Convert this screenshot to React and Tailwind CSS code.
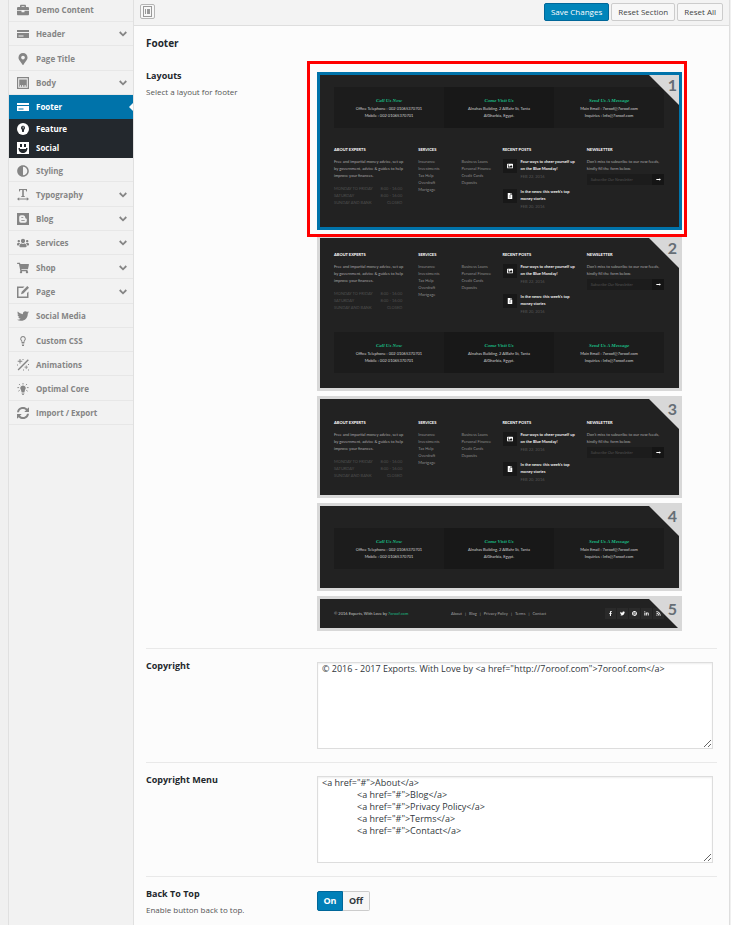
import React from "react";
import {
  FaAdjust,
  FaBriefcase,
  FaFacebookF,
  FaFileAlt,
  FaLinkedinIn,
  FaImage,
  FaLongArrowAltRight,
  FaMapMarkerAlt,
  FaPinterest,
  FaRss,
  FaShoppingCart,
  FaTwitter,
  FaUsers,
} from "react-icons/fa";

function Glyph({ children }) {
  return (
    <svg viewBox="0 0 12 12" className="h-3 w-3" fill="currentColor" aria-hidden="true">
      {children}
    </svg>
  );
}

const CardIcon = () => (
  <Glyph>
    <path fillRule="evenodd" d="M0 2h12v2H0zM0 5h12v5H0zM1.500 7.500h5v1h-5z" />
  </Glyph>
);
const BodyIcon = () => (
  <Glyph>
    <path fillRule="evenodd" d="M0 0h12v12H0zM1.200 1.200v9.600h9.600V1.200z" />
    <path d="M2.200 2.500h7.600V8H2.200zM2.200 8h1v1.800h-1zM4 8h1v1.800H4zM5.800 8h1v1.800h-1zM7.400 8h1v1.800h-1zM9 8h.8v1.800H9z" />
  </Glyph>
);
const FeatureIcon = () => (
  <Glyph>
    <circle cx="6" cy="6" r="6" />
    <path fill="#23282d" d="M6 2.800a2 2 0 0 1 1.200 3.600L6.800 9H5.200l-.4-2.600A2 2 0 0 1 6 2.800z" />
    <path d="M5.700 3.400h.8v2h-.8z" />
  </Glyph>
);
const SmileIcon = () => (
  <Glyph>
    <path d="M0 0h12v12H0z" />
    <path fill="#23282d" d="M3 2h2v3H3zM7 2h2v3H7zM1.500 6h9c0 3-2 5-4.500 5S1.500 9 1.500 6z" />
    <path d="M3 6h6v1H3z" />
  </Glyph>
);
const TypeIcon = () => (
  <Glyph>
    <path d="M2 0h8v2.400h-.7L8.600 1H6.800v6l1.200.5V8H4v-.5L5.200 7V1H3.400l-.7 1.400H2z" />
    <path d="M0 10l2.200-1.800v1.300h7.600V8.200L12 10l-2.200 1.800v-1.300H2.200v1.300z" />
  </Glyph>
);
const BlogIcon = () => (
  <Glyph>
    <path
      fillRule="evenodd"
      d="M0 0h12v12H0zM4 2.200A1.800 1.800 0 0 0 2.200 4v4A1.800 1.800 0 0 0 4 9.800h4A1.800 1.800 0 0 0 9.800 8V6.200c0-.6-.4-.8-.8-.8-.5 0-.7-.2-.7-.7 0-1.500-1-2.500-2.300-2.500zM4.300 4.200h2v.9h-2zM4.300 6.900h3.400v.9H4.300z"
    />
  </Glyph>
);
const EditIcon = () => (
  <Glyph>
    <path d="M0 .5h7.500L6 2H1.500v8.500H10V7l1.500-1.500V12H0z" />
    <path d="M10.300 0L12 1.700 6.300 7.400 4 8.200l.7-2.400z" />
  </Glyph>
);
const BulbIcon = () => (
  <Glyph>
    <path
      fillRule="evenodd"
      d="M6 1a2.800 2.800 0 0 1 1.600 5.100L7.400 8H4.600l-.2-1.900A2.800 2.800 0 0 1 6 1zm0 .9a1.900 1.900 0 0 0-.9 3.500l.3 1.700h1.200l.3-1.700A1.900 1.900 0 0 0 6 1.900z"
    />
    <path d="M4.700 8.500h2.600v.8H4.700zM5 9.700h2v1.200H5z" />
  </Glyph>
);
const WandIcon = () => (
  <Glyph>
    <path d="M10.800.3l1 1L1.600 11.500l-1-1z" />
    <path d="M2.500 0h1v1.800h1.800v1H3.500v1.800h-1V2.800H.7v-1h1.800zM5.500 0h1v1h-1zM0 5.500h1v1H0zM8.800 6.500h.8v1.300h1.300v.8H9.600v1.300h-.8V8.600H7.500v-.8h1.300zM11 5h1v1h-1zM6 10.500h1v1H6zM11 10.500h1v1h-1z" />
  </Glyph>
);
const RayBulbIcon = () => (
  <Glyph>
    <path d="M6 2.400a2.800 2.800 0 0 1 2 4.700L7.500 9h-3L4 7.100a2.800 2.800 0 0 1 2-4.700zM4.600 9.500h2.800v1H4.600zM5.200 11h1.600v1H5.200z" />
    <path
      stroke="currentColor"
      strokeWidth="0.900"
      d="M6 0v1.500M2 1l1.100 1.200M10 1L8.900 2.200M.4 4.600h1.700M11.600 4.600H9.900M1.400 8.200l1.300-.9M10.600 8.200l-1.300-.9"
    />
  </Glyph>
);
const RefreshIcon = () => (
  <Glyph>
    <path d="M0 5.200A6 6 0 0 1 10.300 1.800L12 .2v4.700H7.300L9 3.200A4.200 4.200 0 0 0 1.900 5.200zM12 6.800A6 6 0 0 1 1.700 10.200L0 11.800V7.100h4.700L3 8.800a4.200 4.200 0 0 0 7.100-2z" />
  </Glyph>
);

const topItems = [
  { label: "Demo Content", icon: <FaBriefcase /> },
  { label: "Header", icon: <CardIcon />, more: true },
  { label: "Page Title", icon: <FaMapMarkerAlt /> },
  { label: "Body", icon: <BodyIcon />, more: true },
];

const bottomItems = [
  { label: "Styling", icon: <FaAdjust /> },
  { label: "Typography", icon: <TypeIcon />, more: true },
  { label: "Blog", icon: <BlogIcon />, more: true },
  { label: "Services", icon: <FaUsers />, more: true },
  { label: "Shop", icon: <FaShoppingCart />, more: true },
  { label: "Page", icon: <EditIcon />, more: true },
  { label: "Social Media", icon: <FaTwitter /> },
  { label: "Custom CSS", icon: <BulbIcon /> },
  { label: "Animations", icon: <WandIcon /> },
  { label: "Optimal Core", icon: <RayBulbIcon /> },
  { label: "Import / Export", icon: <RefreshIcon /> },
];

function NavItem({ item }) {
  return (
    <a
      href="#"
      className="flex items-center gap-[7px] border-b border-[#e7e7e7] pt-[2px] pr-[6px] pl-2 text-[#858585]"
    >
      <span className="flex w-3 justify-center text-[12px]">{item.icon}</span>
      <span className="flex-1">{item.label}</span>
      {item.more && (
        <svg viewBox="0 0 8 6" className="h-[6px] w-2" fill="none" aria-hidden="true">
          <path d="M.7 1L4 4.300 7.300 1" stroke="currentColor" strokeWidth="1.800" />
        </svg>
      )}
    </a>
  );
}

function Sidebar() {
  return (
    <nav className="w-[126px] shrink-0 border-x border-[#e0e0e0] bg-[#f2f2f2] text-[8px] leading-[12px] font-bold">
      <div className="-mt-[3px] grid h-[98px] auto-rows-fr">
        {topItems.map((item) => (
          <NavItem key={item.label} item={item} />
        ))}
      </div>
      <a href="#" className="flex h-6 items-center gap-[7px] bg-[#0073aa] pl-2 text-white">
        <CardIcon />
        <span className="flex-1">Footer</span>
        <svg viewBox="0 0 4 8" className="h-2 w-1" fill="#fcfcfc" aria-hidden="true">
          <path d="M4 0v8L0 4z" />
        </svg>
      </a>
      <div className="grid h-[39px] auto-rows-fr bg-[#23282d] text-white">
        <a href="#" className="flex items-center gap-[7px] pl-2">
          <FeatureIcon />
          Feature
        </a>
        <a href="#" className="flex items-center gap-[7px] pl-2">
          <SmileIcon />
          Social
        </a>
      </div>
      <div className="grid h-[267px] auto-rows-fr">
        {bottomItems.map((item) => (
          <NavItem key={item.label} item={item} />
        ))}
      </div>
    </nav>
  );
}

const contacts = [
  { title: "Call Us Now", lines: ["Office Telephone : 002 01065370701", "Mobile : 002 01065370701"] },
  { title: "Come Visit Us", lines: ["Alnahas Building, 2 AlBahr St, Tanta", "AlGharbia, Egypt."] },
  { title: "Send Us A Message", lines: ["Main Email : 7oroof@7oroof.com", "Inquiries : Info@7oroof.com"] },
];

function ContactBoxes() {
  return (
    <div className="grid h-[41px] grid-cols-3 bg-[#1c1c1c] text-center">
      {contacts.map((box) => (
        <div key={box.title} className="pt-[10px] text-[5px] leading-[7px] text-[#d0d0d0] even:bg-[#181818]">
          <p className="mb-px font-['Liberation_Serif',serif] text-[5px] font-bold text-[#1abc84] italic">
            {box.title}
          </p>
          {box.lines.map((line) => (
            <p key={line} className="text-[4px]">
              {line}
            </p>
          ))}
        </div>
      ))}
    </div>
  );
}

function WidgetTitle({ children }) {
  return <h3 className="mb-[5px] text-[4px] leading-[6px] font-bold text-white">{children}</h3>;
}

const hours = [
  ["MONDAY TO FRIDAY", "8:00 - 16:00"],
  ["SATURDAY", "8:00 - 16:00"],
  ["SUNDAY AND BANK", "CLOSED"],
];

const posts = [
  { icon: <FaImage />, lines: ["Four ways to cheer yourself up", "on the Blue Monday!"], date: "FEB 22, 2016" },
  { icon: <FaFileAlt />, lines: ["In the news: this week's top", "money stories"], date: "FEB 20, 2016" },
];

function Widgets() {
  return (
    <div className="grid grid-cols-4 gap-[7px] text-[4px] leading-[7px] whitespace-nowrap text-[#a8a8a8]">
      <div>
        <WidgetTitle>ABOUT EXPERTS</WidgetTitle>
        <p>Free and impartial money advice, set up</p>
        <p>by government, advice &amp; guides to help</p>
        <p>improve your finances.</p>
        <div className="mt-[6px] mr-[9px] text-[#505050]">
          {hours.map(([day, time]) => (
            <p key={day} className="flex justify-between">
              <span>{day}</span>
              <span>{time}</span>
            </p>
          ))}
        </div>
      </div>
      <div>
        <WidgetTitle>SERVICES</WidgetTitle>
        <div className="grid grid-cols-2 gap-[9px] text-[#8c8c8c]">
          <ul>
            <li>Insurance</li>
            <li>Investments</li>
            <li>Tax Help</li>
            <li>Overdraft</li>
            <li>Mortgage</li>
          </ul>
          <ul>
            <li>Business Loans</li>
            <li>Personal Finance</li>
            <li>Credit Cards</li>
            <li>Deposits</li>
          </ul>
        </div>
      </div>
      <div>
        <WidgetTitle>RECENT POSTS</WidgetTitle>
        <div className="flex flex-col gap-2">
          {posts.map((post) => (
            <div key={post.date} className="flex gap-1">
              <span className="mt-px flex h-[14px] w-[14px] items-center justify-center bg-[#181818] text-[6px] text-white">
                {post.icon}
              </span>
              <div>
                <p className="font-bold text-[#eeeeee]">
                  {post.lines[0]}
                  <br />
                  {post.lines[1]}
                </p>
                <p className="mt-px text-[#565656]">{post.date}</p>
              </div>
            </div>
          ))}
        </div>
      </div>
      <div>
        <WidgetTitle>NEWSLETTER</WidgetTitle>
        <p>Don't miss to subscribe to our new feeds,</p>
        <p>kindly fill the form below.</p>
        <div className="mt-[2px] flex h-[11px] items-center bg-[#1c1c1c] pl-1 text-[#505050] italic">
          <span className="flex-1">Subscribe Our Newsletter</span>
          <span className="flex h-[11px] w-3 items-center justify-center bg-[#151515] text-[5px] text-white">
            <FaLongArrowAltRight />
          </span>
        </div>
      </div>
    </div>
  );
}

const socials = [FaFacebookF, FaTwitter, FaPinterest, FaLinkedinIn, FaRss];

function CopyrightBar() {
  return (
    <div className="flex items-center text-[4px] leading-[7px] text-[#a0a0a0]">
      <p className="w-[117px] text-[#c4c4c4]">
        © 2016 Experts, With Love by <span className="text-[#1abc84]">7oroof.com</span>
      </p>
      <p className="flex flex-1 gap-[3px]">
        <span>About</span>
        <span>|</span>
        <span>Blog</span>
        <span>|</span>
        <span>Privacy Policy</span>
        <span>|</span>
        <span>Terms</span>
        <span>|</span>
        <span>Contact</span>
      </p>
      <div className="flex gap-px">
        {socials.map((Icon, i) => (
          <span key={i} className="flex h-[11px] w-[11px] items-center justify-center bg-[#2a2a2a] text-[5px] text-white">
            <Icon />
          </span>
        ))}
      </div>
    </div>
  );
}

function LayoutOption({ number, size, selected, marked, children }) {
  return (
    <label className="relative block">
      <input
        type="radio"
        name="layout"
        value={number}
        defaultChecked={selected}
        aria-label={`Layout ${number}`}
        className="peer sr-only"
      />
      <span
        className={`relative block overflow-hidden border-[3px] border-[#d8d8d8] bg-[#222222] pr-[15px] pl-[14px] font-[Lato,sans-serif] peer-checked:border-[#0073aa] ${size}`}
      >
        {children}
        <span className="absolute top-0 right-0 h-[30px] w-[30px] bg-[#d8d8d8] [clip-path:polygon(0_0,100%_0,100%_100%)]" />
        <span className="absolute top-0 right-[2px] text-[16px] leading-[20px] font-bold text-[#666e75]">
          {number}
        </span>
      </span>
      {marked && (
        <span className="pointer-events-none absolute -top-[11px] -right-[5px] -bottom-[7px] -left-[10px] z-10 border-[3px] border-[#ff0000]" />
      )}
    </label>
  );
}

function Field({ title, note, htmlFor, last, children }) {
  const Title = htmlFor ? "label" : "h2";
  return (
    <section className={`flex ${last ? "" : "border-b border-[#e9e9e9]"}`}>
      <div className="w-[171px] shrink-0 pt-[10px] text-[8px] leading-[14px] text-[#555555]">
        <Title htmlFor={htmlFor} className="block text-[9px] font-bold text-[#23282d]">
          {title}
        </Title>
        {note && <p className="mt-[2px]">{note}</p>}
      </div>
      <div className="min-w-0 flex-1 pt-[13px] pr-1 pb-[13px]">{children}</div>
    </section>
  );
}

const areaClass =
  "block h-[87px] w-full resize border border-[#dddddd] bg-white px-1 text-[9px] leading-[12px] text-[#32373c] shadow-[inset_0_1px_2px_rgba(0,0,0,0.07)]";

const indent = " ".repeat(15);
const menuMarkup = ["About", "Blog", "Privacy Policy", "Terms", "Contact"]
  .map((name) => `<a href="#">${name}</a>`)
  .join("\n" + indent);

export default function App() {
  return (
    <div className="flex min-h-screen bg-[#f0f0f0] pr-px pl-2 font-['Open_Sans',sans-serif]">
      <Sidebar />
      <main className="min-w-0 flex-1 border-r border-[#dedede] bg-[#fcfcfc]">
        <header className="flex h-[26px] items-center justify-between border-b border-[#dedede] bg-[#f3f3f3] pr-[6px] pb-[2px] pl-[6px]">
          <button
            type="button"
            aria-label="Expand options"
            className="flex h-[15px] w-[15px] items-center justify-center rounded-[2px] border border-[#b5b5b5] bg-[#f7f7f7] text-[#999999]"
          >
            <svg viewBox="0 0 11 11" className="h-[11px] w-[11px]" fill="currentColor" aria-hidden="true">
              <path fillRule="evenodd" d="M1 0h9v11H1zM2 1v9h7V1z" />
              <path d="M3 3h1v5H3zM5 3h3v5H5z" />
            </svg>
          </button>
          <div className="flex gap-[2px] text-[8px] leading-[16px]">
            <button type="button" className="rounded-[2px] border border-[#006799] bg-[#0085ba] px-[6px] text-white">
              Save Changes
            </button>
            <button type="button" className="rounded-[2px] border border-[#cccccc] bg-[#f7f7f7] px-[6px] text-[#444444]">
              Reset Section
            </button>
            <button type="button" className="rounded-[2px] border border-[#cccccc] bg-[#f7f7f7] px-[6px] text-[#444444]">
              Reset All
            </button>
          </div>
        </header>
        <div className="px-3">
          <h1 className="pt-[9px] pb-2 text-[10px] leading-[16px] font-bold text-[#23282d]">Footer</h1>
          <Field title="Layouts" note="Select a layout for footer">
            <div className="mb-1 flex max-w-[365px] flex-col gap-[5px]">
              <LayoutOption number={1} size="h-[158px] pt-3" selected marked>
                <ContactBoxes />
                <div className="mt-[19px]">
                  <Widgets />
                </div>
              </LayoutOption>
              <LayoutOption number={2} size="h-[156px] pt-[14px]">
                <div className="h-20">
                  <Widgets />
                </div>
                <ContactBoxes />
              </LayoutOption>
              <LayoutOption number={3} size="h-[102px] pt-[21px]">
                <Widgets />
              </LayoutOption>
              <LayoutOption number={4} size="h-[88px] pt-[22px]">
                <ContactBoxes />
              </LayoutOption>
              <LayoutOption number={5} size="h-[35px] pt-[9px]">
                <CopyrightBar />
              </LayoutOption>
            </div>
          </Field>
          <Field title="Copyright" htmlFor="copyright">
            <textarea
              id="copyright"
              className={areaClass}
              defaultValue={'© 2016 - 2017 Exports. With Love by <a href="http://7oroof.com">7oroof.com</a>'}
            />
          </Field>
          <Field title="Copyright Menu" htmlFor="copyright-menu">
            <textarea id="copyright-menu" className={areaClass} defaultValue={menuMarkup} />
          </Field>
          <Field title="Back To Top" note="Enable button back to top." last>
            <div className="mt-px flex text-[9px] leading-[18px] font-bold">
              <label className="relative block">
                <input type="radio" name="back-to-top" value="on" defaultChecked className="peer sr-only" />
                <span className="block w-[26px] rounded-l-[2px] border border-[#cccccc] bg-[#f7f7f7] text-center text-[#32373c] peer-checked:border-[#006799] peer-checked:bg-[#0080b8] peer-checked:text-white">
                  On
                </span>
              </label>
              <label className="relative block">
                <input type="radio" name="back-to-top" value="off" className="peer sr-only" />
                <span className="block w-[27px] rounded-r-[2px] border border-l-0 border-[#cccccc] bg-[#f7f7f7] text-center text-[#32373c] peer-checked:bg-[#0080b8] peer-checked:text-white">
                  Off
                </span>
              </label>
            </div>
          </Field>
        </div>
      </main>
    </div>
  );
}
